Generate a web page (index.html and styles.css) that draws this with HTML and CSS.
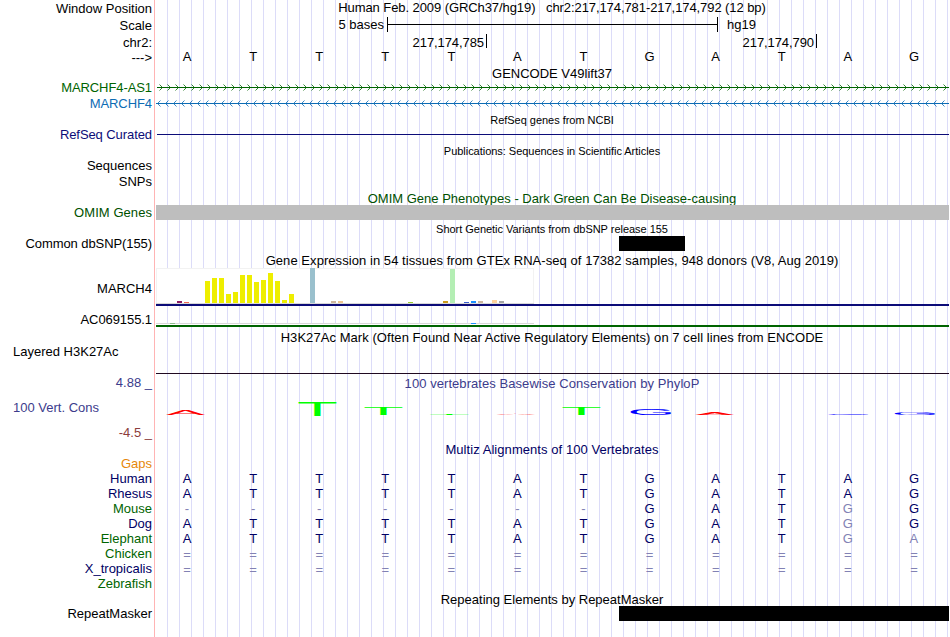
FILE: index.html
```html
<!DOCTYPE html>
<html lang="en">
<head>
<meta charset="utf-8">
<title>Genome Browser chr2:217,174,781-217,174,792</title>
<link rel="stylesheet" href="styles.css">
</head>
<body>
<main class="browser">
  <div class="row h17"><div class="label">Window Position</div><div class="track title up tight">Human Feb. 2009 (GRCh37/hg19) &nbsp; chr2:217,174,781-217,174,792 (12 bp)</div></div>
  <div class="row h17"><div class="label">Scale</div><div class="track scale up"><span class="scale-name">5 bases</span><span class="scale-bar"></span><span>hg19</span></div></div>
  <div class="row h15"><div class="label">chr2:</div><div class="track ticks tight"><span class="tick first">217,174,785</span><span class="tick">217,174,790</span></div></div>
  <div class="row h16"><div class="label">---&gt;</div><div class="track bases up"><span>A</span><span>T</span><span>T</span><span>T</span><span>T</span><span>A</span><span>T</span><span>G</span><span>A</span><span>T</span><span>A</span><span>G</span></div></div>

  <div class="row h14"><div class="label"></div><div class="track title">GENCODE V49lift37</div></div>
  <div class="row h16 green"><div class="label tight">MARCHF4-AS1</div><div class="track">
    <svg width="794" height="15"><defs><pattern id="fwd" x="2" y="0" width="8" height="15" patternUnits="userSpaceOnUse"><path d="M2.5 4.5L5.5 7.5L2.5 10.5" fill="none" stroke="#006400" stroke-opacity=".8"/></pattern></defs><rect x="2" width="792" height="15" fill="url(#fwd)"/><path d="M2 7.5H794" stroke="#006400"/></svg></div></div>
  <div class="row h16 blue"><div class="label tight">MARCHF4</div><div class="track">
    <svg width="794" height="15"><defs><pattern id="rev" x="1" y="0" width="8" height="15" patternUnits="userSpaceOnUse"><path d="M4.5 4.5L1.5 7.5L4.5 10.5" fill="none" stroke="#0c6cb4" stroke-opacity=".8"/></pattern></defs><rect x="1" width="793" height="15" fill="url(#rev)"/><path d="M1 7.5H794" stroke="#0c6cb4"/></svg></div></div>

  <div class="row h15"><div class="label"></div><div class="track title small">RefSeq genes from NCBI</div></div>
  <div class="row h16 navy"><div class="label tight">RefSeq Curated</div><div class="track"><div class="gene-line"></div></div></div>
  <div class="row h15"><div class="label"></div><div class="track title small">Publications: Sequences in Scientific Articles</div></div>
  <div class="row h16"><div class="label">Sequences</div><div class="track"></div></div>
  <div class="row h17"><div class="label">SNPs</div><div class="track"></div></div>

  <div class="row h14 omim"><div class="label"></div><div class="track title">OMIM Gene Phenotypes - Dark Green Can Be Disease-causing</div></div>
  <div class="row h16 omim"><div class="label loose">OMIM Genes</div><div class="track"><div class="block gray"></div></div></div>
  <div class="row h15"><div class="label"></div><div class="track title small">Short Genetic Variants from dbSNP release 155</div></div>
  <div class="row h17"><div class="label tight">Common dbSNP(155)</div><div class="track"><div class="block snp"></div></div></div>

  <div class="row h15"><div class="label"></div><div class="track title loose">Gene Expression in 54 tissues from GTEx RNA-seq of 17382 samples, 948 donors (V8, Aug 2019)</div></div>
  <div class="row h44"><div class="label mid">MARCH4</div><div class="track">
    <svg width="794" height="38" shape-rendering="crispEdges">
      <rect x="1" width="378" height="36" fill="#f2f2f2"/><rect x="2" y="1" width="376" height="34" fill="#fff"/>
      <rect x="1" y="35" width="378" height="1" fill="#d8d8d8"/>
      <path fill="#8b1c62" d="M22 33h5v2h-5z"/><path fill="#ee6a50" d="M29 34h5v1h-5z"/>
      <path fill="#eeee00" d="M50 13h5v22h-5zM57 10h5v25h-5zM64 10h5v25h-5zM71 26h5v9h-5zM78 24h5v11h-5zM85 7h5v28h-5zM92 7h5v28h-5zM99 14h5v21h-5zM106 12h5v23h-5zM113 5h5v30h-5zM120 13h5v22h-5zM127 32h5v3h-5zM134 26h5v9h-5z"/>
      <path fill="#9ac0cd" d="M155 0h5v35h-5z"/><path fill="#cdb79e" d="M176 33h5v2h-5zM323 33h5v2h-5z"/><path fill="#eec591" d="M183 33h5v2h-5z"/>
      <path fill="#9acd32" d="M253 34h5v1h-5z"/><path fill="#cd9b1d" d="M288 33h5v2h-5z"/><path fill="#b4eeb4" d="M295 1h5v34h-5z"/><path fill="#3a5fcd" d="M309 34h5v1h-5z"/><path fill="#1e90ff" d="M316 33h5v2h-5z"/><path fill="#ffd39b" d="M337 32h5v3h-5z"/><path fill="#a6a6a6" d="M344 33h5v2h-5z"/>
      <path fill="#0c0c78" d="M1 36h793v2H1z"/>
    </svg></div></div>
  <div class="row h18"><div class="label tight">AC069155.1</div><div class="track">
    <svg width="794" height="15" shape-rendering="crispEdges">
      <rect x="1" y="11" width="378" height="1" fill="#d8d8d8"/><rect x="1" y="12" width="378" height="1" fill="#fff"/>
      <path fill="#8fbc8f" d="M15 11h5v1h-5z"/><path fill="#b4eeb4" d="M295 11h5v1h-5z"/><path fill="#1e90ff" d="M316 11h5v1h-5z"/>
      <path fill="#006400" d="M1 13h793v2H1z"/>
    </svg></div></div>

  <div class="row h14"><div class="label"></div><div class="track title loose">H3K27Ac Mark (Often Found Near Active Regulatory Elements) on 7 cell lines from ENCODE</div></div>
  <div class="row h31"><div class="label left">Layered H3K27Ac</div><div class="track"><div class="signal-floor"></div></div></div>

  <div class="row h67">
    <div class="label stack phylo"><span>4.88 _</span><span class="left">100 Vert. Cons</span><span class="negative">-4.5 _</span></div>
    <div class="track phylo"><div class="title down loose">100 vertebrates Basewise Conservation by PhyloP</div>
      <svg class="logo" width="794" height="50">
        <g class="a"><text transform="translate(11 24) scale(4.35 .5)">A</text><text transform="translate(341 24) scale(4.35 .08)">A</text><text transform="translate(540 24) scale(4.35 .3)">A</text></g>
        <g class="t"><text transform="translate(141.9 25) scale(4.95 1.45)">T</text><text transform="translate(207.9 24) scale(4.95 .75)">T</text><text transform="translate(273.9 24) scale(4.95 .12)">T</text><text transform="translate(405.9 24) scale(4.95 .75)">T</text></g>
        <g class="g"><text transform="translate(472.4 24) scale(4.55 .62)">G</text><text transform="translate(670.5 24) scale(4.55 .1)">G</text><text transform="translate(736.5 24) scale(4.55 .3)">G</text></g>
      </svg></div>
  </div>

  <div class="row h14 multiz"><div class="label"></div><div class="track title loose">Multiz Alignments of 100 Vertebrates</div></div>
  <div class="row h15"><div class="label gaps">Gaps</div><div class="track"></div></div>
  <div class="row h15 multiz"><div class="label">Human</div><div class="track bases"><span>A</span><span>T</span><span>T</span><span>T</span><span>T</span><span>A</span><span>T</span><span>G</span><span>A</span><span>T</span><span>A</span><span>G</span></div></div>
  <div class="row h15 multiz"><div class="label">Rhesus</div><div class="track bases"><span>A</span><span>T</span><span>T</span><span>T</span><span>T</span><span>A</span><span>T</span><span>G</span><span>A</span><span>T</span><span>A</span><span>G</span></div></div>
  <div class="row h15 multiz"><div class="label alt">Mouse</div><div class="track bases"><i>-</i><i>-</i><i>-</i><i>-</i><i>-</i><i>-</i><i>-</i><span>G</span><span>A</span><span>T</span><i>G</i><span>G</span></div></div>
  <div class="row h15 multiz"><div class="label">Dog</div><div class="track bases"><span>A</span><span>T</span><span>T</span><span>T</span><span>T</span><span>A</span><span>T</span><span>G</span><span>A</span><span>T</span><i>G</i><span>G</span></div></div>
  <div class="row h15 multiz"><div class="label alt">Elephant</div><div class="track bases"><span>A</span><span>T</span><span>T</span><span>T</span><span>T</span><span>A</span><span>T</span><span>G</span><span>A</span><span>T</span><i>G</i><i>A</i></div></div>
  <div class="row h15 multiz"><div class="label alt">Chicken</div><div class="track bases down"><i>=</i><i>=</i><i>=</i><i>=</i><i>=</i><i>=</i><i>=</i><i>=</i><i>=</i><i>=</i><i>=</i><i>=</i></div></div>
  <div class="row h15 multiz"><div class="label">X_tropicalis</div><div class="track bases down"><i>=</i><i>=</i><i>=</i><i>=</i><i>=</i><i>=</i><i>=</i><i>=</i><i>=</i><i>=</i><i>=</i><i>=</i></div></div>
  <div class="row h16 multiz"><div class="label alt">Zebrafish</div><div class="track"></div></div>

  <div class="row h14"><div class="label"></div><div class="track title">Repeating Elements by RepeatMasker</div></div>
  <div class="row h31"><div class="label">RepeatMasker</div><div class="track"><div class="block repeat"></div></div></div>
</main>
</body>
</html>
```
FILE: styles.css
```css
body {
  margin: 0;
  background: #fff;
  overflow: hidden;
}

.browser {
  box-sizing: border-box;
  width: 949px;
  height: 637px;
  padding-top: 1px;
  font: 13px/15px "Liberation Sans", Arial, sans-serif;
  color: #000;
  white-space: nowrap;
  /* left divider, blank label margin, then a guide line every 12px */
  background-image:
    linear-gradient(#ffb4b4, #ffb4b4),
    linear-gradient(#fff, #fff),
    linear-gradient(to right, #dcdcf8 1px, transparent 1px);
  background-size: 1px 100%, 160px 100%, 12px 100%;
  background-position: 154px 0, 0 0, 11px 0;
  background-repeat: no-repeat, no-repeat, repeat-x;
}

.row {
  display: grid;
  grid-template-columns: 155px 794px;
  align-items: start;
}

.h14 { height: 14px; }
.h15 { height: 15px; }
.h16 { height: 16px; }
.h17 { height: 17px; }
.h18 { height: 18px; }
.h31 { height: 31px; }
.h44 { height: 44px; }
.h67 { height: 67px; }

.label {
  padding-right: 3px;
  text-align: right;
}
.label.mid { padding-top: 13px; }
.left {
  padding-left: 13px;
  text-align: left;
}
.stack {
  display: grid;
  grid-auto-rows: 25px;
}

.track { min-width: 0; }
.title { text-align: center; }
.small {
  margin-top: 1px;
  font-size: 11px;
  letter-spacing: -0.03px;
}
.tight { letter-spacing: -0.08px; }
.loose { letter-spacing: 0.06px; }
.up { margin-top: -1px; }
.down { margin-top: 1px; }
svg { display: block; }

.green { color: #006400; }
.blue { color: #0c6cb4; }
.navy { color: #0c0c78; }
.omim { color: #005000; }
.phylo { color: #3c3c8c; }
.negative { color: #8c3c3c; }
.gaps { color: #e6870a; }
.multiz { color: #000064; }
.alt { color: #006400; }

.scale {
  display: flex;
}
.scale-name {
  width: 229px;
  margin-right: 3px;
  text-align: right;
}
.scale-bar {
  box-sizing: border-box;
  width: 331px;
  height: 15px;
  margin-right: 9px;
  border: solid #000;
  border-width: 0 1px;
  background: linear-gradient(#000, #000) 0 7px / 100% 1px no-repeat;
}

.ticks { display: flex; }
.tick {
  box-sizing: border-box;
  width: 330px;
  height: 14px;
  margin-top: -1px;
  padding: 1px 2px 0 0;
  border-right: 1px solid #000;
  text-align: right;
}
.tick.first { width: 332px; }

.bases {
  display: grid;
  grid-template-columns: repeat(12, 1fr);
  width: 793px;
  margin-left: -1px;
  text-align: center;
}
.bases i {
  font-style: normal;
  color: #8282b4;
}

.gene-line {
  height: 1px;
  margin: 7px 0 0 2px;
  background: #0c0c78;
}
.block {
  height: 15px;
  background: #000;
}
.block.gray {
  margin-left: 1px;
  background: #bebebe;
}
.block.snp {
  width: 66px;
  margin-left: 464px;
}
.block.repeat { margin-left: 464px; }
.signal-floor {
  height: 1px;
  margin: 29px 0 0 1px;
  background: #200a20;
}

.logo { font-size: 13.5px; }
.logo .a { fill: #f00; }
.logo .t { fill: #0f0; }
.logo .g { fill: #00f; }
```
